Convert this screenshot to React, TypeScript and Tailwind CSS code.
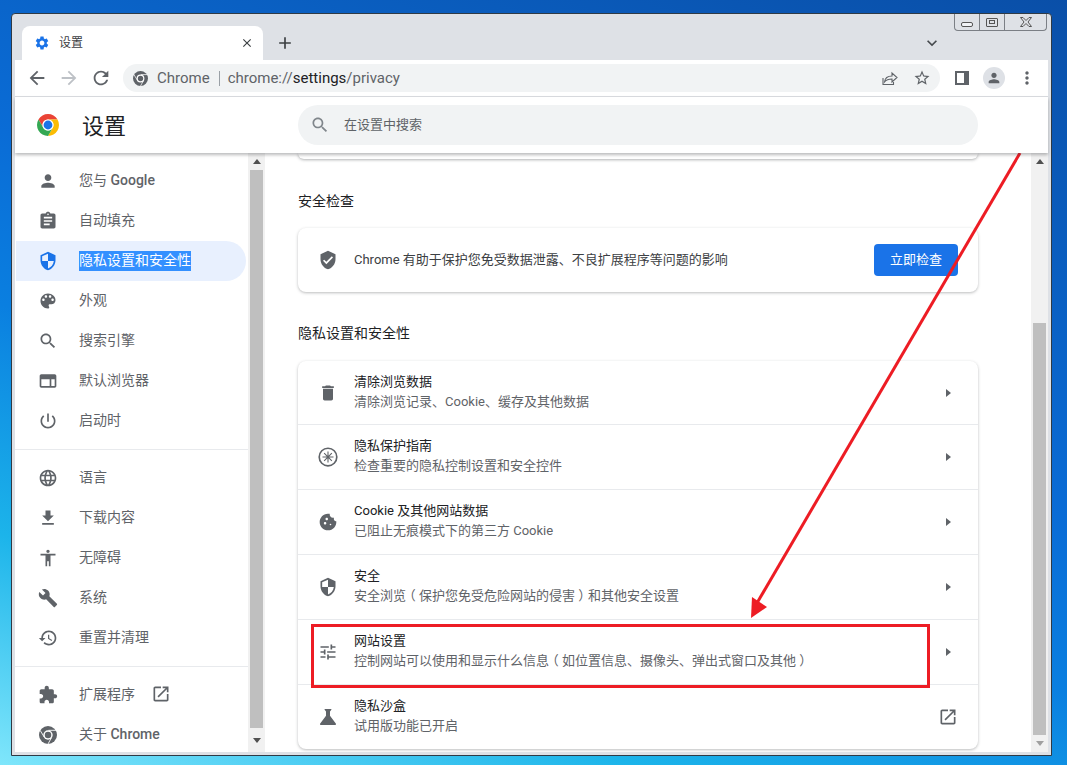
import React from "react";

const P: Record<string, string> = {
  person: "M12 12c2.21 0 4-1.79 4-4s-1.79-4-4-4-4 1.79-4 4 1.79 4 4 4zm0 2c-2.67 0-8 1.34-8 4v2h16v-2c0-2.66-5.33-4-8-4z",
  assignment: "M19 3h-4.18C14.4 1.84 13.3 1 12 1c-1.3 0-2.4.84-2.82 2H5c-1.1 0-2 .9-2 2v14c0 1.1.9 2 2 2h14c1.1 0 2-.9 2-2V5c0-1.1-.9-2-2-2zm-7 0c.55 0 1 .45 1 1s-.45 1-1 1-1-.45-1-1 .45-1 1-1zm2 14H7v-2h7v2zm3-4H7v-2h10v2zm0-4H7V7h10v2z",
  shield: "M12 1L3 5v6c0 5.55 3.84 10.74 9 12 5.16-1.26 9-6.45 9-12V5l-9-4zm0 10.99h7c-.53 4.12-3.28 7.79-7 8.94V12H5V6.3l7-3.11v8.8z",
  palette: "M12 3c-4.97 0-9 4.03-9 9s4.03 9 9 9c.83 0 1.5-.67 1.5-1.5 0-.39-.15-.74-.39-1.01-.23-.26-.38-.61-.38-.99 0-.83.67-1.5 1.5-1.5H16c2.76 0 5-2.24 5-5 0-4.42-4.03-8-9-8zm-5.5 9c-.83 0-1.5-.67-1.5-1.5S5.67 9 6.5 9 8 9.67 8 10.5 7.33 12 6.5 12zm3-4C8.67 8 8 7.33 8 6.5S8.67 5 9.5 5s1.5.67 1.5 1.5S10.33 8 9.5 8zm5 0c-.83 0-1.5-.67-1.5-1.5S13.67 5 14.5 5s1.5.67 1.5 1.5S15.33 8 14.5 8zm3 4c-.83 0-1.5-.67-1.5-1.5S16.67 9 17.5 9s1.5.67 1.5 1.5-.67 1.5-1.5 1.5z",
  search: "M15.5 14h-.79l-.28-.27C15.41 12.59 16 11.11 16 9.5 16 5.91 13.09 3 9.5 3S3 5.91 3 9.5 5.91 16 9.5 16c1.61 0 3.09-.59 4.23-1.57l.27.28v.79l5 4.99L20.49 19l-4.99-5zm-6 0C7.01 14 5 11.99 5 9.5S7.01 5 9.5 5 14 7.01 14 9.5 11.99 14 9.5 14z",
  browser: "M20 4H4c-1.1 0-2 .9-2 2v12c0 1.1.9 2 2 2h16c1.1 0 2-.9 2-2V6c0-1.1-.9-2-2-2zm-6 14H4v-8h10v8zm6 0h-4v-8h4v8z",
  power: "M13 3h-2v10h2V3zm4.83 2.17l-1.42 1.42C17.99 7.86 19 9.81 19 12c0 3.87-3.13 7-7 7s-7-3.13-7-7c0-2.19 1.01-4.14 2.58-5.42L6.17 5.17C4.23 6.82 3 9.26 3 12c0 4.97 4.03 9 9 9s9-4.03 9-9c0-2.74-1.23-5.18-3.17-6.83z",
  language: "M11.99 2C6.47 2 2 6.48 2 12s4.47 10 9.99 10C17.52 22 22 17.52 22 12S17.52 2 11.99 2zm6.93 6h-2.95c-.32-1.25-.78-2.45-1.38-3.56 1.84.63 3.37 1.91 4.33 3.56zM12 4.04c.83 1.2 1.48 2.53 1.91 3.96h-3.82c.43-1.43 1.08-2.76 1.91-3.96zM4.26 14C4.1 13.36 4 12.69 4 12s.1-1.36.26-2h3.38c-.08.66-.14 1.32-.14 2 0 .68.06 1.34.14 2H4.26zm.82 2h2.95c.32 1.25.78 2.45 1.38 3.56-1.84-.63-3.37-1.9-4.33-3.56zm2.95-8H5.08c.96-1.66 2.49-2.93 4.33-3.56C8.81 5.55 8.35 6.75 8.03 8zM12 19.96c-.83-1.2-1.48-2.53-1.91-3.96h3.82c-.43 1.43-1.08 2.76-1.91 3.96zM14.34 14H9.66c-.09-.66-.16-1.32-.16-2 0-.68.07-1.35.16-2h4.68c.09.65.16 1.32.16 2 0 .68-.07 1.34-.16 2zm.25 5.56c.6-1.11 1.06-2.31 1.38-3.56h2.95c-.96 1.65-2.49 2.93-4.33 3.56zM16.36 14c.08-.66.14-1.32.14-2 0-.68-.06-1.34-.14-2h3.38c.16.64.26 1.31.26 2s-.1 1.36-.26 2h-3.38z",
  download: "M19 9h-4V3H9v6H5l7 7 7-7zM5 18v2h14v-2H5z",
  access: "M12 2c1.1 0 2 .9 2 2s-.9 2-2 2-2-.9-2-2 .9-2 2-2zm9 7h-6v13h-2v-6h-2v6H9V9H3V7h18v2z",
  build: "M22.7 19l-9.1-9.1c.9-2.3.4-5-1.5-6.9-2-2-5-2.4-7.4-1.3L9 6 6 9 1.6 4.7C.4 7.1.9 10.1 2.9 12.1c1.9 1.9 4.6 2.4 6.9 1.5l9.1 9.1c.4.4 1 .4 1.4 0l2.3-2.3c.5-.4.5-1.1.1-1.4z",
  restore: "M13 3c-4.97 0-9 4.03-9 9H1l3.89 3.89.07.14L9 12H6c0-3.87 3.13-7 7-7s7 3.13 7 7-3.13 7-7 7c-1.93 0-3.68-.79-4.94-2.06l-1.42 1.42C8.27 19.99 10.51 21 13 21c4.97 0 9-4.03 9-9s-4.03-9-9-9zm-1 5v5l4.28 2.54.72-1.21-3.5-2.08V8H12z",
  extension: "M20.5 11H19V7c0-1.1-.9-2-2-2h-4V3.5C13 2.12 11.88 1 10.5 1S8 2.12 8 3.5V5H4c-1.1 0-1.99.9-1.99 2v3.8H3.5c1.49 0 2.7 1.21 2.7 2.7s-1.21 2.7-2.7 2.7H2V20c0 1.1.9 2 2 2h3.8v-1.5c0-1.49 1.21-2.7 2.7-2.7 1.49 0 2.7 1.21 2.7 2.7V22H17c1.1 0 2-.9 2-2v-4h1.5c1.38 0 2.5-1.12 2.5-2.5S21.88 11 20.5 11z",
  open: "M19 19H5V5h7V3H5c-1.11 0-2 .9-2 2v14c0 1.1.89 2 2 2h14c1.1 0 2-.9 2-2v-7h-2v7zM14 3v2h3.59l-9.83 9.83 1.41 1.41L19 6.41V10h2V3h-7z",
  trash: "M6 19c0 1.1.9 2 2 2h8c1.1 0 2-.9 2-2V7H6v12zM19 4h-3.5l-1-1h-5l-1 1H5v2h14V4z",
  cookie: "M21.95 10.99c-1.79-.03-3.7-1.95-2.68-4.22-2.97 1-5.78-1.59-5.19-4.56C7.11.74 2 6.41 2 12c0 5.52 4.48 10 10 10 5.89 0 10.54-5.08 9.95-11.01zM8.5 15c-.83 0-1.5-.67-1.5-1.5S7.67 12 8.5 12s1.5.67 1.5 1.5S9.33 15 8.5 15zm2-5C9.67 10 9 9.33 9 8.5S9.67 7 10.5 7s1.5.67 1.5 1.5-.67 1.5-1.5 1.5zm4.5 6c-.55 0-1-.45-1-1s.45-1 1-1 1 .45 1 1-.45 1-1 1z",
  verified: "M12 1L3 5v6c0 5.55 3.84 10.74 9 12 5.16-1.26 9-6.45 9-12V5l-9-4zm-2 16l-4-4 1.41-1.41L10 14.17l6.59-6.59L18 9l-8 8z",
  tune: "M3 17v2h6v-2H3zM3 5v2h10V5H3zm10 16v-2h8v-2h-8v-2h-2v6h2zM7 9v2H3v2h4v2h2V9H7zm14 4v-2H11v2h10zm-6-4h2V7h4V5h-4V3h-2v6z",
  flask: "M19.8 18.4L14 10.67V6.5l1.35-1.69c.26-.33.03-.81-.39-.81H9.04c-.42 0-.65.48-.39.81L10 6.5v4.17L4.2 18.4c-.49.66-.02 1.6.8 1.6h14c.82 0 1.29-.94.8-1.6z",
  gear: "M19.14 12.94c.04-.3.06-.61.06-.94 0-.32-.02-.64-.07-.94l2.03-1.58c.18-.14.23-.41.12-.61l-1.92-3.32c-.12-.22-.37-.29-.59-.22l-2.39.96c-.5-.38-1.03-.7-1.62-.94l-.36-2.54c-.04-.24-.24-.41-.48-.41h-3.84c-.24 0-.43.17-.47.41l-.36 2.54c-.59.24-1.13.57-1.62.94l-2.39-.96c-.22-.08-.47 0-.59.22L2.74 8.87c-.12.21-.08.47.12.61l2.03 1.58c-.05.3-.09.63-.09.94s.02.64.07.94l-2.03 1.58c-.18.14-.23.41-.12.61l1.92 3.32c.12.22.37.29.59.22l2.39-.96c.5.38 1.03.7 1.62.94l.36 2.54c.05.24.24.41.48.41h3.84c.24 0 .44-.17.47-.41l.36-2.54c.59-.24 1.13-.56 1.62-.94l2.39.96c.22.08.47 0 .59-.22l1.92-3.32c.12-.22.07-.47-.12-.61l-2.01-1.58zM12 15.6c-1.98 0-3.6-1.62-3.6-3.6s1.62-3.6 3.6-3.6 3.6 1.62 3.6 3.6-1.62 3.6-3.6 3.6z",
  back: "M20 11H7.83l5.59-5.59L12 4l-8 8 8 8 1.41-1.41L7.83 13H20v-2z",
  forward: "M12 4l-1.41 1.41L16.17 11H4v2h12.17l-5.58 5.59L12 20l8-8z",
  reload: "M17.65 6.35C16.2 4.9 14.21 4 12 4c-4.42 0-7.99 3.58-7.99 8s3.57 8 7.99 8c3.73 0 6.84-2.55 7.73-6h-2.08c-.82 2.33-3.04 4-5.65 4-3.31 0-6-2.69-6-6s2.69-6 6-6c1.66 0 3.14.69 4.22 1.78L13 11h7V4l-2.35 2.35z",
  close: "M19 6.41L17.59 5 12 10.59 6.41 5 5 6.41 10.59 12 5 17.59 6.41 19 12 13.41 17.59 19 19 17.59 13.41 12z",
  plus: "M19 13h-6v6h-2v-6H5v-2h6V5h2v6h6v2z",
  chevron: "M7.41 8.59L12 13.17l4.59-4.58L18 10l-6 6-6-6z",
  dots: "M12 8c1.1 0 2-.9 2-2s-.9-2-2-2-2 .9-2 2 .9 2 2 2zm0 2c-1.1 0-2 .9-2 2s.9 2 2 2 2-.9 2-2-.9-2-2-2zm0 6c-1.1 0-2 .9-2 2s.9 2 2 2 2-.9 2-2-.9-2-2-2z",
  star: "M22 9.24l-7.19-.62L12 2 9.19 8.63 2 9.24l5.46 4.73L5.82 21 12 17.27 18.18 21l-1.63-7.03L22 9.24zM12 15.4l-3.76 2.27 1-4.28-3.32-2.88 4.38-.38L12 6.1l1.71 4.04 4.38.38-3.32 2.88 1 4.28L12 15.4z",
};

const Ico = ({ d, s = 20, c = "#5f6368", className = "" }: { d: string; s?: number; c?: string; className?: string }) => (
  <svg width={s} height={s} viewBox="0 0 24 24" fill={c} className={"shrink-0 " + className}>
    <path d={P[d]} />
  </svg>
);

const RED = "M3.34 7A10 10 0 0 1 20.66 7H12A5 5 0 0 0 7.67 14.5Z";
const YEL = "M20.66 7A10 10 0 0 1 12 22L16.33 14.5A5 5 0 0 0 12 7Z";
const GRN = "M12 22A10 10 0 0 1 3.34 7L7.67 14.5A5 5 0 0 0 16.33 14.5Z";

const ChromeLogo = ({ s = 22 }: { s?: number }) => (
  <svg width={s} height={s} viewBox="2 2 20 20" className="shrink-0">
    <path d={RED} fill="#ea4335" />
    <path d={YEL} fill="#fbbc04" />
    <path d={GRN} fill="#34a853" />
    <circle cx="12" cy="12" r="5" fill="#fff" />
    <circle cx="12" cy="12" r="4" fill="#1a73e8" />
  </svg>
);

const ChromeGray = ({ s = 18, c = "#5f6368" }: { s?: number; c?: string }) => (
  <svg width={s} height={s} viewBox="2 2 20 20" className="shrink-0">
    <circle cx="12" cy="12" r="10" fill={c} />
    <circle cx="12" cy="12" r="5.2" fill="#fff" />
    <circle cx="12" cy="12" r="3.6" fill={c} />
    <path d="M12.5 6.8H20.66M15.9 14.9L12 22M7.9 14.4L3.34 7" stroke="#fff" strokeWidth="1" fill="none" />
  </svg>
);

const Guide = () => (
  <svg width="22" height="22" viewBox="0 0 24 24" fill="none" stroke="#5f6368" className="shrink-0 -mx-[1px]">
    <circle cx="12" cy="12" r="9.6" strokeWidth="1.8" />
    <path d="M12 6v12M6 12h12M7.8 7.8l8.4 8.4M16.2 7.8l-8.4 8.4" strokeWidth="1.2" />
  </svg>
);

const Latin = ({ children }: { children: React.ReactNode }) => <span className="font-medium">{children}</span>;
const Paren = ({ children }: { children: React.ReactNode }) => (
  <span className="inline-block w-[13px] text-center [font-feature-settings:'halt']">{children}</span>
);

const NavRow = ({ icon, children, selected }: { icon: React.ReactNode; children: React.ReactNode; selected?: boolean }) => (
  <div
    className={
      "flex h-[40px] items-center pl-[22px] ml-[1px] w-[230px] rounded-r-[20px] gap-[21px] text-[14px] text-[#5f6368] " +
      (selected ? "bg-[#e8f0fe]" : "")
    }
  >
    <div className="w-[20px] h-[20px] flex items-center justify-center shrink-0">{icon}</div>
    {selected ? children : <div className="mb-[2px]">{children}</div>}
  </div>
);

const Divider = () => <div className="h-px bg-[#e8eaed] my-[8px]" />;

const Tri = () => (
  <svg width="5" height="8" viewBox="0 0 5 8" className="shrink-0">
    <path d="M0 0l5 4-5 4z" fill="#5f6368" />
  </svg>
);

const SetRow = ({
  icon,
  title,
  sub,
  last,
  end,
  h = "h-[65px]",
}: {
  icon: React.ReactNode;
  title: React.ReactNode;
  sub: React.ReactNode;
  last?: boolean;
  end?: React.ReactNode;
  h?: string;
}) => (
  <div className={"flex items-center pl-[20px] gap-[16px] " + h + " " + (last ? "" : "border-b border-[#e8eaed]")}>
    <div className="w-[20px] h-[20px] flex items-center justify-center shrink-0">{icon}</div>
    <div className="flex-1 mb-[2px]">
      <div className="text-[13px] leading-[20px] text-[#202124]">{title}</div>
      <div className="text-[13px] leading-[20px] text-[#5f6368]">{sub}</div>
    </div>
    {end ?? (
      <div className="pr-[27px]">
        <Tri />
      </div>
    )}
  </div>
);

const ArrowUp = () => (
  <svg width="8" height="5" viewBox="0 0 8 5"><path d="M4 0l4 5H0z" fill="#505050" /></svg>
);
const ArrowDown = ({ c = "#505050" }: { c?: string }) => (
  <svg width="8" height="5" viewBox="0 0 8 5"><path d="M0 0h8L4 5z" fill={c} /></svg>
);

export default function App() {
  return (
    <div
      className="relative w-[1067px] h-[765px] overflow-hidden pt-[13px] pl-[11px] bg-[linear-gradient(200deg,#0a4fa8_0%,#0a6cd6_45%,#0a7fe0_60%,#1cb4ea_80%,#7fe6fb_100%)]"
      style={{ fontFamily: 'Roboto, "Noto Sans CJK SC", sans-serif' }}
    >
      {/* window */}
      <div className="relative w-[1041px] h-[743px] border border-[#2f3a45] rounded-t-[4px] bg-[#dee1e6] flex flex-col">
        {/* window buttons */}
        <div className="absolute right-[4px] top-0 flex h-[17px] border border-t-0 border-[#7b7f85] rounded-b-[4px]">
          <div className="w-[25px] border-r border-[#7b7f85] flex items-center justify-center">
            <div className="w-[12px] h-[5px] mt-[4px] border border-[#555] rounded-[2px] bg-[#f0f2f5]" />
          </div>
          <div className="w-[25px] border-r border-[#7b7f85] flex items-center justify-center">
            <div className="w-[12px] h-[9px] border border-[#555] rounded-[1px] flex items-center justify-center">
              <div className="w-[6px] h-[4px] border border-[#555]" />
            </div>
          </div>
          <div className="w-[41px] flex items-center justify-center">
            <svg width="12" height="10" viewBox="0 0 12 10" fill="none" stroke="#555" strokeWidth="1">
              <path d="M0.5 0.5h2.5L6 3.5l3-3h2.5L8 5l3.5 4.5H9L6 6.5l-3 3H0.5L4 5z" />
            </svg>
          </div>
        </div>

        {/* tab strip */}
        <div className="h-[46px] pt-[12px] pl-[10px] flex items-stretch">
          <div className="w-[241px] bg-white rounded-t-[8px] flex items-center pl-[12px] pr-[9px] text-[12px] text-[#3c4043]">
            <Ico d="gear" s={16} c="#1a73e8" />
            <span className="ml-[9px] flex-1">设置</span>
            <Ico d="close" s={14} c="#3c4043" />
          </div>
          <div className="ml-[12px] flex items-center">
            <Ico d="plus" s={20} c="#3c4043" />
          </div>
          <div className="ml-auto mr-[109px] flex items-center">
            <Ico d="chevron" s={20} c="#45494d" />
          </div>
        </div>

        {/* inner */}
        <div className="flex-1 mx-[3px] mb-[3px] bg-white flex flex-col min-h-0">
          {/* toolbar */}
          <div className="h-[37px] border-b border-[#dadce0] flex items-center shrink-0">
            <div className="ml-[11px] flex items-center gap-[10px]">
              <Ico d="back" s={22} />
              <Ico d="forward" s={22} c="#bdc1c6" />
              <Ico d="reload" s={22} />
            </div>
            <div className="ml-[11px] w-[817px] h-[28px] rounded-full bg-[#f1f3f4] flex items-center pl-[10px] pr-[9px]">
              <ChromeGray s={15} />
              <span className="ml-[9px] text-[15px] text-[#5f6368]">Chrome</span>
              <div className="w-px h-[15px] bg-[#9aa0a6] ml-[9px]" />
              <span className="ml-[8px] text-[15px] text-[#5f6368]">
                chrome://<span className="text-[#202124]">settings</span>/privacy
              </span>
              <svg width="18" height="18" viewBox="0 0 18 18" fill="none" stroke="#5f6368" strokeWidth="1.1" className="ml-auto mr-[14px]">
                <path d="M2 9v6.5h10.5V13" />
                <path d="M3.5 13c.5-4 3.5-6 7.5-6V4l5 4.5L11 13V10c-3 0-5.5.5-7.5 3z" />
              </svg>
              <Ico d="star" s={18} />
            </div>
            <div className="ml-[15px] w-[14px] h-[14px] bg-[#5f6368] shrink-0 relative">
              <div className="ml-[2px] mt-[2px] w-[7px] h-[10px] bg-white" />
            </div>
            <div className="ml-[14px] w-[22px] h-[22px] rounded-full bg-[#dee1e6] flex items-center justify-center shrink-0">
              <Ico d="person" s={16} c="#5f6368" />
            </div>
            <div className="ml-[12px]">
              <Ico d="dots" s={20} />
            </div>
          </div>

          {/* settings header */}
          <div className="relative z-10 h-[56px] shrink-0 flex items-center bg-white shadow-[0_2px_3px_rgba(60,64,67,0.35)]">
            <div className="ml-[22px]">
              <ChromeLogo s={22} />
            </div>
            <span className="ml-[23px] w-[44px] text-[22px] text-[#202124] mt-[2px]">设置</span>
            <div className="ml-[172px] w-[680px] h-[40px] rounded-[20px] bg-[#f1f3f4] flex items-center pl-[12px]">
              <Ico d="search" s={20} c="#80868b" />
              <span className="ml-[14px] text-[13px] text-[#5f6368]">在设置中搜索</span>
            </div>
          </div>

          {/* body */}
          <div className="flex-1 flex min-h-0 overflow-hidden">
            {/* sidebar */}
            <div className="w-[233px] shrink-0 pt-[8px] overflow-hidden">
              <NavRow icon={<Ico d="person" />}>
                <span>您与 <Latin>Google</Latin></span>
              </NavRow>
              <NavRow icon={<Ico d="assignment" />}>自动填充</NavRow>
              <NavRow selected icon={<Ico d="shield" c="#1a73e8" />}>
                <span className="bg-[#3390ff] text-white h-[20px] leading-[18px] block">隐私设置和安全性</span>
              </NavRow>
              <NavRow icon={<Ico d="palette" />}>外观</NavRow>
              <NavRow icon={<Ico d="search" />}>搜索引擎</NavRow>
              <NavRow icon={<Ico d="browser" />}>默认浏览器</NavRow>
              <NavRow icon={<Ico d="power" />}>启动时</NavRow>
              <Divider />
              <NavRow icon={<Ico d="language" />}>语言</NavRow>
              <NavRow icon={<Ico d="download" />}>下载内容</NavRow>
              <NavRow icon={<Ico d="access" />}>无障碍</NavRow>
              <NavRow icon={<Ico d="build" />}>系统</NavRow>
              <NavRow icon={<Ico d="restore" />}>重置并清理</NavRow>
              <Divider />
              <NavRow icon={<Ico d="extension" />}>
                <span className="flex items-center">
                  扩展程序
                  <Ico d="open" s={20} className="ml-[16px]" />
                </span>
              </NavRow>
              <NavRow icon={<ChromeGray s={18} />}>
                <span>关于 <Latin>Chrome</Latin></span>
              </NavRow>
            </div>

            {/* sidebar scrollbar */}
            <div className="w-[17px] shrink-0 bg-[#f1f1f1] flex flex-col items-center">
              <div className="h-[17px] flex items-center justify-center"><ArrowUp /></div>
              <div className="h-[558px] w-[13px] bg-[#bfbfbf]" />
              <div className="h-[24px] flex items-center justify-center"><ArrowDown /></div>
            </div>

            {/* main */}
            <div className="w-[766px] shrink-0 pl-[33px] overflow-hidden">
              <div className="w-[680px]">
                <div className="h-[6px] bg-white rounded-b-[8px] shadow-[0_1px_3px_rgba(60,64,67,0.4)]" />
                <div className="mt-[32px] h-[20px] text-[14px] leading-[20px] text-[#202124]">安全检查</div>
                <div className="mt-[17px] h-[64px] bg-white rounded-[8px] shadow-[0_1px_3px_rgba(60,64,67,0.35)] flex items-center pl-[20px] pr-[20px]">
                  <Ico d="verified" />
                  <span className="ml-[16px] flex-1 text-[13px] text-[#3c4043]">Chrome 有助于保护您免受数据泄露、不良扩展程序等问题的影响</span>
                  <div className="w-[84px] h-[32px] rounded-[4px] bg-[#1a73e8] text-white text-[13px] flex items-center justify-center">立即检查</div>
                </div>
                <div className="mt-[31px] h-[20px] text-[14px] leading-[20px] text-[#202124]">隐私设置和安全性</div>
                <div className="mt-[18px] bg-white rounded-[8px] shadow-[0_1px_3px_rgba(60,64,67,0.35)]">
                  <SetRow h="h-[64px]" icon={<Ico d="trash" />} title="清除浏览数据" sub="清除浏览记录、Cookie、缓存及其他数据" />
                  <SetRow icon={<Guide />} title="隐私保护指南" sub="检查重要的隐私控制设置和安全控件" />
                  <SetRow icon={<Ico d="cookie" />} title="Cookie 及其他网站数据" sub="已阻止无痕模式下的第三方 Cookie" />
                  <SetRow icon={<Ico d="shield" />} title="安全" sub={<>安全浏览<Paren>（</Paren>保护您免受危险网站的侵害<Paren>）</Paren>和其他安全设置</>} />
                  <SetRow icon={<Ico d="tune" />} title="网站设置" sub={<>控制网站可以使用和显示什么信息<Paren>（</Paren>如位置信息、摄像头、弹出式窗口及其他<Paren>）</Paren></>} />
                  <SetRow
                    h="h-[64px]"
                    last
                    icon={<Ico d="flask" s={24} className="-m-[2px]" />}
                    title="隐私沙盒"
                    sub="试用版功能已开启"
                    end={<div className="pr-[20px]"><Ico d="open" /></div>}
                  />
                </div>
              </div>
            </div>

            {/* main scrollbar */}
            <div className="w-[17px] shrink-0 bg-[#f1f1f1] flex flex-col items-center">
              <div className="h-[17px] flex items-center justify-center"><ArrowUp /></div>
              <div className="h-[153px]" />
              <div className="h-[412px] w-[13px] bg-[#bfbfbf]" />
              <div className="h-[17px] flex items-center justify-center"><ArrowDown c="#a0a0a0" /></div>
            </div>
          </div>
        </div>
      </div>

      {/* annotations */}
      <div className="absolute left-[311px] top-[624px] w-[619px] h-[64px] border-[3px] border-[#ed1c24]" />
      <svg className="absolute left-0 top-0 pointer-events-none" width="1067" height="765" viewBox="0 0 1067 765">
        <line x1="1020" y1="153" x2="757" y2="603" stroke="#ed1c24" strokeWidth="3" />
        <path d="M751 618L752 597L767 607Z" fill="#ed1c24" />
      </svg>
    </div>
  );
}
